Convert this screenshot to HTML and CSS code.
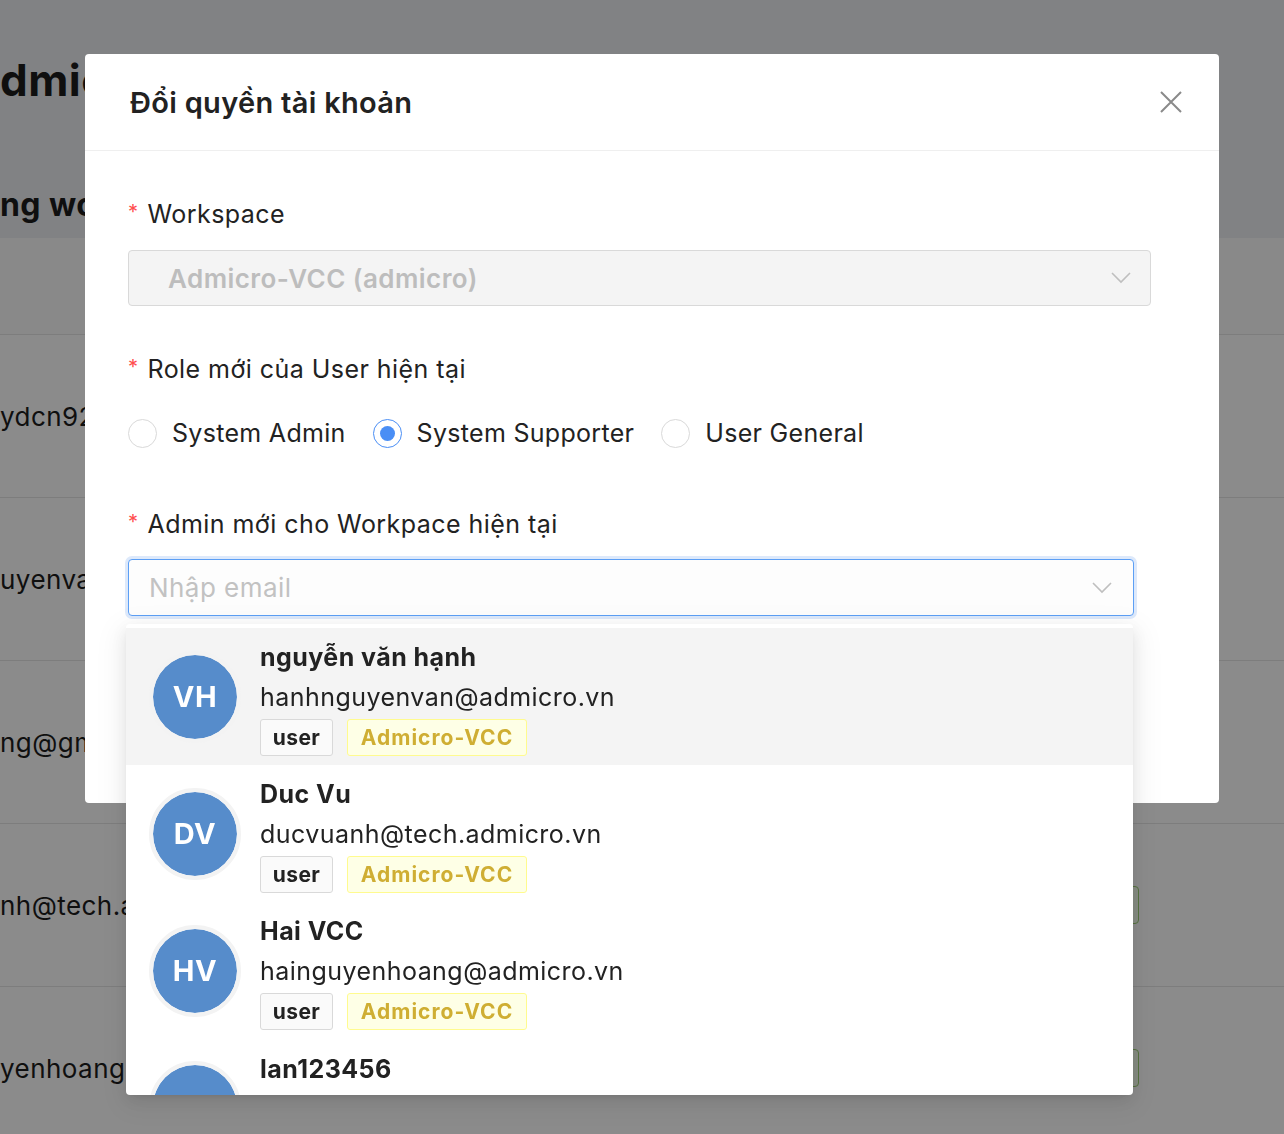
FILE: index.html
```html
<!DOCTYPE html>
<html lang="vi">
<head>
<meta charset="utf-8">
<title>Đổi quyền tài khoản</title>
<link rel="stylesheet" href="styles.css">
</head>
<body>
<div class="page">
  <div class="page-head">
    <h1 class="page-title">dmicro Workspace</h1>
    <h2 class="page-sub">ng workspace</h2>
  </div>
  <div class="table">
    <div class="thead"></div>
    <div class="trow"><span class="cell">ydcn92@gmail.com</span><span class="gtag">Active</span></div>
    <div class="trow"><span class="cell">uyenvan@admicro.vn</span><span class="gtag">Active</span></div>
    <div class="trow"><span class="cell">ng@gmail.com</span><span class="gtag">Active</span></div>
    <div class="trow"><span class="cell">nh@tech.admicro.vn</span><span class="gtag">Active</span></div>
    <div class="trow"><span class="cell">yenhoang@admicro.vn</span><span class="gtag">Active</span></div>
  </div>
</div>

<div class="mask"></div>

<div class="modal">
  <div class="modal-header">
    <div class="modal-title">Đổi quyền tài khoản</div>
    <button class="close" aria-label="Đóng">
      <svg width="24" height="24" viewBox="0 0 24 24"><path d="M2 2 L22 22 M22 2 L2 22" stroke="#8a8a8a" stroke-width="2" fill="none"/></svg>
    </button>
  </div>
  <div class="modal-body">
    <div class="label label-first"><span class="req">*</span><span>Workspace</span></div>
    <div class="select disabled">
      <span class="select-value">Admicro-VCC (admicro)</span>
      <svg class="chev" width="20" height="12" viewBox="0 0 20 12"><path d="M1 1 L10 10 L19 1" stroke="#bfbfbf" stroke-width="1.6" fill="none"/></svg>
    </div>

    <div class="label label-gap"><span class="req">*</span><span>Role mới của User hiện tại</span></div>
    <div class="radios">
      <label class="radio"><span class="dot"></span>System Admin</label>
      <label class="radio checked"><span class="dot"></span>System Supporter</label>
      <label class="radio"><span class="dot"></span>User General</label>
    </div>

    <div class="label label-gap2"><span class="req">*</span><span>Admin mới cho Workpace hiện tại</span></div>
    <div class="select focused">
      <span class="placeholder">Nhập email</span>
      <svg class="chev" width="20" height="12" viewBox="0 0 20 12"><path d="M1 1 L10 10 L19 1" stroke="#bfbfbf" stroke-width="1.6" fill="none"/></svg>
    </div>
  </div>
</div>

<div class="dropdown">
  <div class="opt active">
    <div class="avatar">VH</div>
    <div class="info">
      <div class="name">nguyễn văn hạnh</div>
      <div class="email">hanhnguyenvan@admicro.vn</div>
      <div class="tags"><span class="tag tag-user">user</span><span class="tag tag-ws">Admicro-VCC</span></div>
    </div>
  </div>
  <div class="opt">
    <div class="avatar">DV</div>
    <div class="info">
      <div class="name">Duc Vu</div>
      <div class="email">ducvuanh@tech.admicro.vn</div>
      <div class="tags"><span class="tag tag-user">user</span><span class="tag tag-ws">Admicro-VCC</span></div>
    </div>
  </div>
  <div class="opt">
    <div class="avatar">HV</div>
    <div class="info">
      <div class="name">Hai VCC</div>
      <div class="email">hainguyenhoang@admicro.vn</div>
      <div class="tags"><span class="tag tag-user">user</span><span class="tag tag-ws">Admicro-VCC</span></div>
    </div>
  </div>
  <div class="opt opt-partial">
    <div class="avatar"></div>
    <div class="info">
      <div class="name">lan123456</div>
    </div>
  </div>
</div>
</body>
</html>
```

FILE: styles.css
```css
* { box-sizing: border-box; }
html, body { margin: 0; padding: 0; }
body {
  width: 1284px;
  height: 1134px;
  overflow: hidden;
  font-family: Inter, "Noto Sans", "Liberation Sans", sans-serif;
  letter-spacing: 0.45px;
  color: #222;
  background: #ffffff;
}

/* underlying page */
.page { width: 1284px; }
.page-head {
  background: #eceef2;
  height: 238px;
  padding-top: 52px;
}
.page-title {
  margin: 0;
  font-size: 44px;
  line-height: 56px;
  font-weight: 700;
  color: #1c1c1c;
  white-space: nowrap;
}
.page-sub {
  margin: 77px 0 0 0;
  font-size: 32px;
  line-height: 40px;
  font-weight: 700;
  color: #1c1c1c;
  white-space: nowrap;
}
.table { background: #fff; }
.thead {
  height: 97px;
  background: #fcfcfc;
  border-bottom: 1px solid #e6e6e6;
}
.trow {
  height: 163px;
  border-bottom: 1px solid #e6e6e6;
  display: flex;
  align-items: center;
  justify-content: space-between;
  padding-right: 145px;
  font-size: 26px;
  color: #1c1c1c;
}
.cell { white-space: nowrap; }
.gtag {
  width: 104px;
  height: 38px;
  border: 1px solid #9ccf75;
  background: #f6ffed;
  border-radius: 4px;
  color: #389e0d;
  font-size: 20px;
  display: flex;
  align-items: center;
  justify-content: center;
}

.mask {
  position: fixed;
  inset: 0;
  background: rgba(0, 0, 0, 0.455);
}

/* modal */
.modal {
  position: fixed;
  left: 85px;
  top: 54px;
  width: 1134px;
  height: 749px;
  background: #fff;
  border-radius: 4px;
}
.modal-header {
  height: 97px;
  border-bottom: 1px solid #efefef;
  display: flex;
  align-items: center;
  justify-content: space-between;
  padding: 0 36px 0 45px;
}
.modal-title {
  font-size: 29px;
  font-weight: 600;
  letter-spacing: 0.3px;
  color: #222;
}
.close {
  border: 0;
  background: none;
  padding: 0;
  width: 24px;
  height: 24px;
  display: flex;
}
.modal-body {
  padding: 45px 68px 0 43px;
}
.label {
  font-size: 25px;
  line-height: 36px;
  color: #222;
  display: flex;
  align-items: center;
}
.req {
  color: #ff4d4f;
  font-size: 20px;
  line-height: 20px;
  margin-right: 9px;
  margin-top: -4px;
}
.label-gap { margin-top: 45px; }
.label-gap2 { margin-top: 55px; }
.select {
  margin-top: 18px;
  height: 56px;
  border: 1px solid #d9d9d9;
  border-radius: 4px;
  display: flex;
  align-items: center;
  justify-content: space-between;
  padding: 0 19px 0 39px;
  font-size: 26px;
}
.select.disabled { background: #f4f4f4; }
.select-value { color: #bdbdbd; font-weight: 600; }
.select.focused {
  margin-top: 17px;
  height: 57px;
  margin-right: 17px;
  border-color: #5c9ff5;
  box-shadow: 0 0 0 3px #dde9fb;
  padding: 0 21px 0 20px;
  background: #fdfdfd;
}
.placeholder { color: #c2c2c2; }
.radios {
  margin-top: 28px;
  height: 36px;
  display: flex;
  align-items: center;
  gap: 27px;
}
.radio {
  display: flex;
  align-items: center;
  font-size: 25px;
  letter-spacing: 0.3px;
  color: #222;
}
.dot {
  width: 29px;
  height: 29px;
  border: 1px solid #d9d9d9;
  border-radius: 50%;
  margin-right: 15px;
  display: flex;
  align-items: center;
  justify-content: center;
  background: #fff;
}
.radio.checked .dot { border: 1.5px solid #4a8ef5; }
.radio.checked .dot::after {
  content: "";
  width: 15px;
  height: 15px;
  border-radius: 50%;
  background: #4a8ef5;
}

/* dropdown */
.dropdown {
  position: fixed;
  left: 126px;
  top: 624px;
  width: 1007px;
  height: 471px;
  padding: 4px 0 7px;
  background: #fff;
  border-radius: 4px;
  overflow: hidden;
  box-shadow: 0 6px 16px rgba(0,0,0,0.08), 0 3px 6px -4px rgba(0,0,0,0.12), 0 9px 28px 8px rgba(0,0,0,0.05);
}
.opt {
  height: 137px;
  display: flex;
  align-items: center;
  padding-left: 23px;
}
.opt.active { background: #f4f4f4; }
.opt-partial {
  height: 56px;
  align-items: flex-start;
  overflow: hidden;
}
.avatar {
  width: 92px;
  height: 92px;
  flex: none;
  border-radius: 50%;
  border: 4px solid #f3f3f3;
  background: #568ccb;
  background-clip: padding-box;
  color: #fff;
  font-weight: 700;
  font-size: 29px;
  letter-spacing: 0.5px;
  display: flex;
  align-items: center;
  justify-content: center;
}
.opt-partial .avatar { margin-top: 22px; }
.info { margin-left: 19px; }
.opt-partial .info { margin-top: 10px; }
.name {
  font-size: 25px;
  font-weight: 700;
  line-height: 40px;
  color: #222;
}
.email {
  font-size: 25px;
  line-height: 40px;
  color: #222;
}
.tags {
  margin-top: 2px;
  display: flex;
  gap: 14px;
}
.tag {
  height: 37px;
  border-radius: 3px;
  font-size: 21px;
  font-weight: 700;
  display: flex;
  align-items: center;
  justify-content: center;
}
.tag-user {
  width: 73px;
  background: #fafafa;
  border: 1px solid #d9d9d9;
  color: #222;
}
.tag-ws {
  width: 180px;
  background: #feffe6;
  border: 1px solid #fffb8f;
  color: #cfae33;
  letter-spacing: 1px;
}
```
